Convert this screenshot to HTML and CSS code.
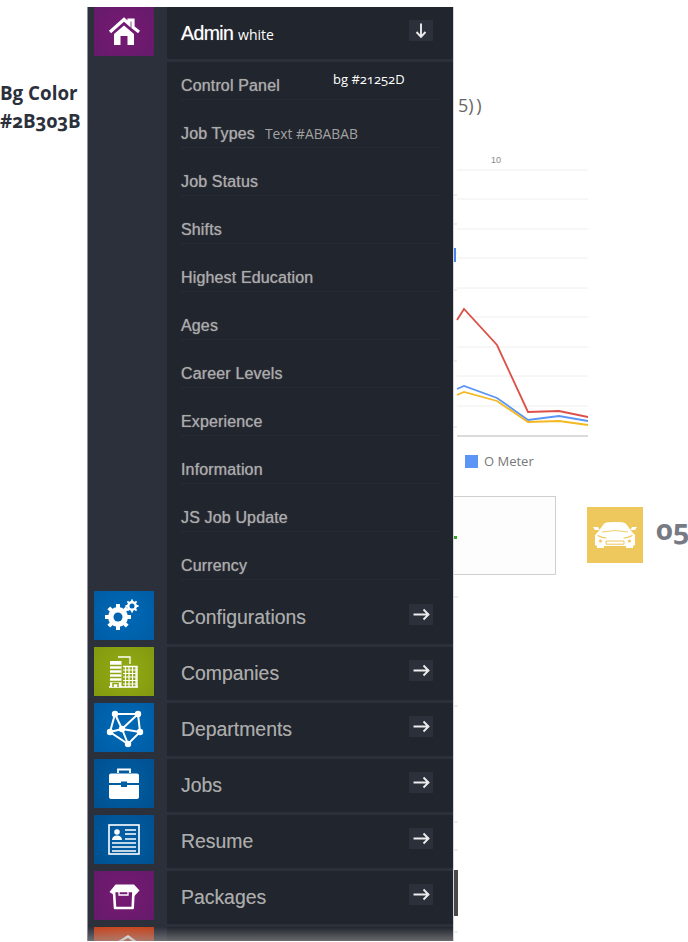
FILE: index.html
```html
<!DOCTYPE html>
<html lang="en">
<head>
<meta charset="utf-8">
<title>Admin sidebar colours</title>
<link rel="stylesheet" href="styles.css">
</head>
<body>
<div class="page">
  <aside class="note">Bg Color<br>#2B303B</aside>

  <nav class="sidebar">
    <div class="rail">
      <a class="tile tile-purple tile-home">
        <svg viewBox="0 0 60 49" class="icon"><path d="M16 25 30 12.500l5 4.400V13h4v7.300L45 25" fill="none" stroke="#fff" stroke-width="3.200"/><path d="M20 27 30 18.500 40 27v11H33.500V29h-7v9H20z" fill="#fff"/></svg>
      </a>
      <div class="rail-gap"></div>
      <a class="tile tile-blue">
        <svg viewBox="0 0 60 49" class="icon"><g fill="none" stroke="#fff"><circle cx="24" cy="26" r="7.500" stroke-width="5"/><path d="M24 13v26M11 26h26M14.800 16.800l18.400 18.400M33.200 16.800 14.800 35.200" stroke-width="4"/><circle cx="38" cy="15" r="3.800" stroke-width="2.500"/><path d="M38 8.500v13M31.500 15h13M33.400 10.400l9.200 9.200M42.600 10.400l-9.200 9.200" stroke-width="1.800"/></g><circle cx="24" cy="26" r="4.500" fill="#0064b0"/><circle cx="38" cy="15" r="2.500" fill="#0064b0"/></svg>
      </a>
      <a class="tile tile-green">
        <svg viewBox="0 0 60 49" class="icon"><g fill="none" stroke="#fff"><path d="M15 40h29" stroke-width="1.600"/><path d="M16 14h11.500v26H16z" fill="#fff" stroke="none"/><path d="M16 18.500h11.500M16 22.500h11.500M16 26.500h11.500M16 30.500h11.500M16 34.500h11.500" stroke="#8ca70f" stroke-width="1.600"/><path d="M19 40v-3.500h5V40" stroke="#8ca70f" stroke-width="1.500"/><path d="M24 10h12v7" stroke-width="1.300"/><path d="M29 19.500h14V40" stroke-width="1.400"/><path d="M29 23h14M29 26.500h14M29 30h14M29 33.500h14M29 37h14M31.500 20v20M35 20v20M38.500 20v20M42 20v20" stroke-width="1.200"/></g></svg>
      </a>
      <a class="tile tile-blue">
        <svg viewBox="0 0 60 49" class="icon"><path d="M21 11H44L46 29 34 41 16 29zM21 11 28 26 44 11M16 29 28 26 46 29M28 26 34 41" fill="none" stroke="#fff" stroke-width="2"/><g fill="#fff"><circle cx="21" cy="11" r="3.200"/><circle cx="44" cy="11" r="3.200"/><circle cx="28" cy="26" r="3.200"/><circle cx="16" cy="29" r="3.200"/><circle cx="46" cy="29" r="3.200"/><circle cx="34" cy="41" r="3.200"/></g></svg>
      </a>
      <a class="tile tile-navy">
        <svg viewBox="0 0 60 49" class="icon"><path d="M24 14v-3.500h12V14" fill="none" stroke="#fff" stroke-width="1.800"/><path d="M15 16.500a2 2 0 0 1 2-2h26a2 2 0 0 1 2 2V24H33v-1.500h-6V24H15zM15 26h12v2h6v-2h12v12a2 2 0 0 1-2 2H17a2 2 0 0 1-2-2z" fill="#fff"/></svg>
      </a>
      <a class="tile tile-navy">
        <svg viewBox="0 0 60 49" class="icon"><rect x="15" y="10" width="30" height="29" fill="none" stroke="#fff" stroke-width="1.600"/><circle cx="23" cy="17" r="2.800" fill="#fff"/><path d="M18 25c0-3 2-4.500 5-4.500s5 1.500 5 4.500z" fill="#fff"/><path d="M31 15h11M31 19h11M31 24h11M18 28h24M18 32h24M18 36h24" stroke="#fff" stroke-width="1.300"/></svg>
      </a>
      <a class="tile tile-purple">
        <svg viewBox="0 0 60 49" class="icon"><path d="M20 20h19.500l-.8 17H21z" fill="none" stroke="#fff" stroke-width="2.600" stroke-linejoin="round"/><path d="M15.500 21l6-7.500H40l5.500 6-6 6.500V20H20v4z" fill="#fff"/><path d="M25 20v4h9v-4z" fill="none" stroke="#fff" stroke-width="1.300"/></svg>
      </a>
      <a class="tile tile-orange">
        <svg viewBox="0 0 60 49" class="icon"><path d="M20 18 34 9.500l10 7" fill="none" stroke="#fff" stroke-width="2.500"/></svg>
      </a>
    </div>

    <div class="panel">
      <header class="head">
        <span class="head-title"><b>Admin</b> <span class="head-note">white</span></span>
        <span class="arrow-btn"><svg viewBox="0 0 24 21" class="arrow"><path d="M12 3.500v13M7.500 12l4.500 4.800 4.500-4.800" /></svg></span>
      </header>
      <ul class="sub">
        <li>Control Panel</li>
        <li>Job Types</li>
        <li>Job Status</li>
        <li>Shifts</li>
        <li>Highest Education</li>
        <li>Ages</li>
        <li>Career Levels</li>
        <li>Experience</li>
        <li>Information</li>
        <li>JS Job Update</li>
        <li>Currency</li>
      </ul>
      <div class="main-row"><span class="row-label">Configurations</span><span class="arrow-btn"><svg viewBox="0 0 24 21" class="arrow"><path d="M4.500 10.500h15M14.500 5.500l5 5-5 5"/></svg></span></div>
      <div class="main-row"><span class="row-label">Companies</span><span class="arrow-btn"><svg viewBox="0 0 24 21" class="arrow"><path d="M4.500 10.500h15M14.500 5.500l5 5-5 5"/></svg></span></div>
      <div class="main-row"><span class="row-label">Departments</span><span class="arrow-btn"><svg viewBox="0 0 24 21" class="arrow"><path d="M4.500 10.500h15M14.500 5.500l5 5-5 5"/></svg></span></div>
      <div class="main-row"><span class="row-label">Jobs</span><span class="arrow-btn"><svg viewBox="0 0 24 21" class="arrow"><path d="M4.500 10.500h15M14.500 5.500l5 5-5 5"/></svg></span></div>
      <div class="main-row"><span class="row-label">Resume</span><span class="arrow-btn"><svg viewBox="0 0 24 21" class="arrow"><path d="M4.500 10.500h15M14.500 5.500l5 5-5 5"/></svg></span></div>
      <div class="main-row"><span class="row-label">Packages</span><span class="arrow-btn"><svg viewBox="0 0 24 21" class="arrow"><path d="M4.500 10.500h15M14.500 5.500l5 5-5 5"/></svg></span></div>
      <div class="main-row"></div>
      <span class="anno anno-bg">bg #21252D</span>
      <span class="anno anno-text">Text #ABABAB</span>
    </div>
  </nav>

  <main class="content">
    <div class="clipped-title">5) )</div>
    <div class="chart-tick">10</div>
    <svg class="chart" viewBox="0 0 134 290" width="134" height="290">
      <g class="grid">
        <path d="M3 5h131M3 34h131M3 64h131M3 93h131M3 123h131M3 152h131M3 182h131M3 211h131M3 241h131"/>
      </g>
      <path class="base" d="M3 271h131"/>
      <path class="grid-strong" d="M0 30h3M0 59h3M0 88h3M0 125h3M0 196h3M0 262h3"/>
      <rect class="mark-blue" x="0" y="83" width="2" height="14"/>
      <polyline class="line-red" points="3,155 10,144 43,180 74,247 105,246 134,252"/>
      <polyline class="line-blue" points="3,224 10,221 43,233 74,255 105,251 134,256"/>
      <polyline class="line-yellow" points="3,230 10,227 43,236 74,257 105,256 134,260"/>
    </svg>
    <div class="legend"><span class="legend-key"></span>O Meter</div>
    <div class="stats">
      <div class="stat-box"><span class="stat-mark"></span></div>
      <div class="stat-tile">
        <svg viewBox="0 0 56 56" class="car">
          <path d="M11 25 16 18q1.500-2.500 5-2.800 7-.6 14 0 3.500.3 5 2.800l5 7 3 3v10l-2 1v2h-7v-2H17v2h-7v-2l-2-1V28z" fill="#fff"/>
          <path d="M6 20h5l1.500 3H8zM50 20h-5l-1.500 3H48z" fill="#fff"/>
          <path d="M15 25q13-3 26 0" fill="none" stroke="#eec85c" stroke-width=".9"/>
          <path d="M10.500 28.500q5 2.500 9 2.500M45.500 28.500q-5 2.500-9 2.500" fill="none" stroke="#eec85c" stroke-width="1.100"/>
          <path d="M19 34h18v3.200H19z" fill="none" stroke="#eec85c" stroke-width="1"/>
          <circle cx="13.500" cy="34" r="1.500" fill="#eec85c"/><circle cx="42.500" cy="34" r="1.500" fill="#eec85c"/>
        </svg>
      </div>
      <div class="stat-num">05</div>
    </div>
    <svg class="lower-ticks" viewBox="0 0 6 352" width="6" height="352">
      <path class="grid-strong" d="M0 7h4M0 116h4M0 232h4M0 260h4M0 342h4"/>
      <rect x="0" y="280" width="4" height="46" fill="#4a4a4a"/>
    </svg>
  </main>
</div>
</body>
</html>
```
FILE: styles.css
```css
* { box-sizing: border-box; }
html, body { margin: 0; padding: 0; background: #fff; }
body { width: 688px; height: 942px; overflow: hidden; font-family: "Liberation Sans", Arial, sans-serif; }

.page { display: flex; align-items: flex-start; height: 942px; }

.note {
  width: 87px;
  flex: none;
  margin-top: 79px;
  font-family: "Open Sans", "Noto Sans", sans-serif;
  font-weight: 700;
  font-size: 18.8px;
  line-height: 28px;
  color: #2b303b;
  font-variant-numeric: oldstyle-nums;
  white-space: nowrap;
}

/* Sidebar */
.sidebar {
  position: relative;
  display: flex;
  flex: none;
  width: 367px;
  height: 934px;
  margin-top: 7px;
  overflow: hidden;
  background: #2b303b;
  border-left: 1px solid #8d9098;
  border-right: 1px solid #d5d6d8;
}
.sidebar::after {
  content: "";
  position: absolute;
  left: 0; right: 0; bottom: 0;
  height: 14px;
  background: linear-gradient(rgba(120,120,120,0), rgba(150,150,150,.6));
}
.rail { width: 79px; flex: none; padding-left: 6px; display: flex; flex-direction: column; gap: 7px; }
.rail-gap { height: 521px; flex: none; }
.tile { display: block; flex: none; width: 60px; height: 49px; }
.tile .icon { display: block; width: 60px; height: 49px; filter: blur(.35px); }
.tile-purple { background: radial-gradient(circle, #761a74 0%, #651a69 100%); }
.tile-blue { background: radial-gradient(circle, #006ab8 0%, #005ca4 100%); }
.tile-green { background: radial-gradient(circle, #93ab14 0%, #82990f 100%); }
.tile-navy { background: radial-gradient(circle, #005fa6 0%, #00508f 100%); }
.tile-orange { background: radial-gradient(circle, #d2512a 0%, #c4411c 100%); }

.panel { position: relative; width: 286px; flex: none; background: #21252d; color: #ababab; }
.head {
  display: flex; align-items: center; justify-content: space-between;
  height: 55px;
  padding: 0 20px 5px 14px;
  border-bottom: 3px solid #2b303b;
}
.head-title { padding-top: 5px; color: #fff; font-size: 19.500px; letter-spacing: -.6px; }
.head-title b { font-weight: 400; text-shadow: 0 0 1px rgba(255,255,255,.5); }
.head-note { font-family: "Open Sans", sans-serif; font-size: 14px; letter-spacing: 0; }

.arrow-btn { display: block; width: 24px; height: 21px; background: #2b303b; flex: none; }
.arrow { display: block; width: 24px; height: 21px; fill: none; stroke: #ececec; stroke-width: 1.900; }

.sub { list-style: none; margin: -10px 0 11px; padding: 0 0 0 14px; }
.sub li {
  height: 48px;
  width: 259px;
  padding-top: 24px;
  font-size: 16px;
  line-height: 20px;
  letter-spacing: .15px;
  color: #ababab;
  text-shadow: 0 0 1px rgba(171,171,171,.8);
  border-bottom: 1px solid #262a33;
}
.main-row {
  display: flex; align-items: center; justify-content: space-between;
  height: 56px;
  padding: 0 20px 6px 14px;
  font-size: 19.400px;
  color: #ababab;
  border-bottom: 3px solid #2b303b;
  text-shadow: 0 0 .6px rgba(171,171,171,.6);
}
.row-label { padding-top: 5px; }
.anno { position: absolute; font-family: "Open Sans", sans-serif; font-size: 14px; line-height: 18px; font-variant-numeric: oldstyle-nums; }
.anno-bg { left: 166px; top: 63px; color: #fff; font-size: 13px; }
.anno-text { left: 98px; top: 118px; color: #a2a2a2; font-size: 13.800px; }

/* Background page */
.content { flex: none; width: 234px; color: #777; }
.clipped-title { margin: 93px 0 0 4px; font-family: "Open Sans", sans-serif; font-size: 18px; line-height: 24px; color: #666; word-spacing: -2px; }
.chart-tick { margin: 37px 0 0 37px; font-size: 9px; line-height: 12px; color: #888; }
.chart { display: block; margin-top: -1px; }
.grid path { stroke: #eeeeee; stroke-width: 1; fill: none; }
.grid-strong { stroke: #dddddd; stroke-width: 1; fill: none; }
.base { stroke: #cfcfcf; stroke-width: 1.500; fill: none; }
.mark-blue { fill: #4a86e8; }
.line-red, .line-blue, .line-yellow { fill: none; stroke-width: 1.800; }
.line-red { stroke: #dc5048; }
.line-blue { stroke: #5b95f5; }
.line-yellow { stroke: #f4b921; }

.legend { display: flex; align-items: center; gap: 6px; margin: -2px 0 0 11px; height: 16px; font-family: "Open Sans", sans-serif; font-size: 13px; color: #777; }
.legend-key { width: 13px; height: 13px; background: #5b95f5; }

.stats { display: flex; align-items: center; margin-top: 26px; height: 80px; }
.stat-box { position: relative; flex: none; width: 102px; height: 79px; background: #fdfdfd; border: 1px solid #cfcfcf; border-left: 0; }
.stat-mark { position: absolute; left: 0; top: 39px; width: 3px; height: 3px; background: #3aa02a; }
.stat-tile { width: 56px; height: 56px; margin-left: 31px; background: #eec85c; flex: none; }
.car { display: block; width: 56px; height: 56px; filter: blur(.3px); }
.stat-num { flex: none; margin-left: 13px; margin-top: -12px; font-family: "Open Sans", sans-serif; font-weight: 700; font-size: 29px; line-height: 40px; color: #777a85; font-variant-numeric: oldstyle-nums; }
.lower-ticks { display: block; margin-top: 15px; }
```
